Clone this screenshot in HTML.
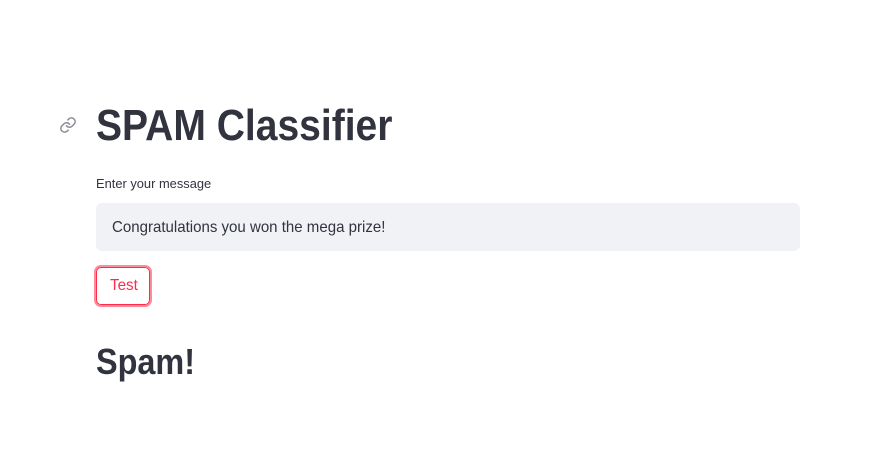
<!DOCTYPE html>
<html><head><meta charset="utf-8"><style>
body{margin:0;width:890px;height:464px;background:#fff;font-family:"Liberation Sans",sans-serif;color:#31333f;position:relative;overflow:hidden}
.a{position:absolute;white-space:nowrap;transform-origin:left center}
</style></head><body>
<svg class="a" style="left:59px;top:116px" width="18" height="18" viewBox="0 0 24 24" fill="none" stroke="#8a8c94" stroke-width="2" stroke-linecap="round"><path d="M10 13a5 5 0 0 0 7.5.5l3-3a5 5 0 0 0-7-7l-1.7 1.7"/><path d="M14 11a5 5 0 0 0-7.5-.5l-3 3a5 5 0 0 0 7 7l1.7-1.7"/></svg>
<div class="a" style="left:96px;top:99px;font-size:44px;font-weight:bold;line-height:54px;transform:scaleX(0.887)">SPAM Classifier</div>
<div class="a" style="left:96px;top:175px;font-size:13px;line-height:18px;transform:scaleX(0.99)">Enter your message</div>
<div class="a" style="left:96px;top:203px;width:704px;height:48px;background:#f0f2f6;border-radius:6px"></div>
<div class="a" style="left:112px;top:218px;font-size:16px;line-height:20px;transform:scaleX(0.94)">Congratulations you won the mega prize!</div>
<div class="a" style="left:94px;top:265px;width:54px;height:38px;border:2px solid #ff8a99;border-radius:7px"></div>
<div class="a" style="left:96px;top:267px;width:54px;height:38px;border:1px solid #ff2b4b;border-radius:5px;box-sizing:border-box;background:#fff"></div>
<div class="a" style="left:110px;top:276px;font-size:16px;line-height:20px;color:#ff2b4b;transform:scaleX(0.95)">Test</div>
<div class="a" style="left:96px;top:340px;font-size:36px;font-weight:bold;line-height:44px;transform:scaleX(0.9)">Spam!</div>
</body></html>
